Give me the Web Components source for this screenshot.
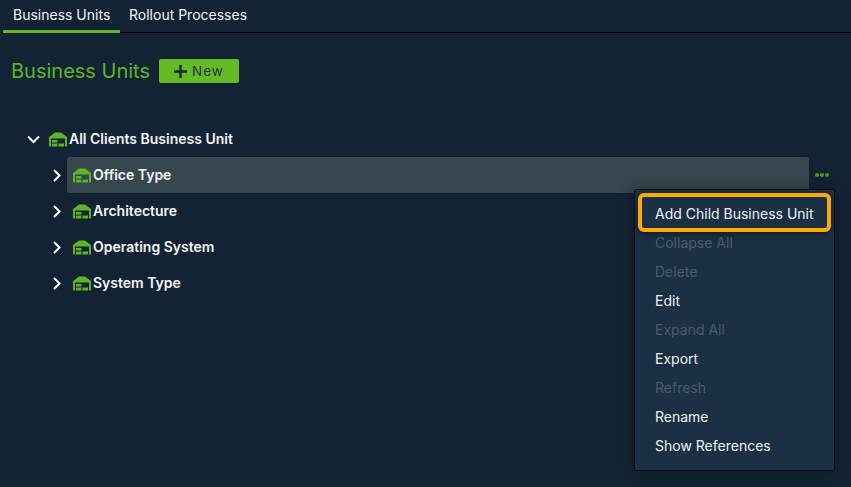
<!DOCTYPE html>
<html>
<head>
<meta charset="utf-8">
<style>
  html, body { margin: 0; height: 100%; }
  body {
    background: #142334;
    color: #fff;
    font-family: Inter, "Open Sans", sans-serif;
    width: 851px;
    height: 487px;
    overflow: hidden;
    position: relative;
  }
</style>
</head>
<body>
<unit-page></unit-page>

<script>
const HOUSE = `
<svg width="20" height="15" viewBox="0 0 20 15" style="flex:none">
  <path fill="#5db524" d="M0 5 L6 .5 H12 L18 5 V14.5 H16 V6.5 H2 V14.5 H0 Z"/>
  <rect x="3" y="8" width="5.5" height="2.5" fill="#5db524"/>
  <rect x="3" y="11.5" width="5.5" height="3" fill="#5db524"/>
  <rect x="9.5" y="11.5" width="5.5" height="3" fill="#5db524"/>
</svg>`;

class TabBar extends HTMLElement {
  constructor() {
    super();
    this.attachShadow({mode: "open"}).innerHTML = `
      <style>
        :host { display: flex; height: 32px; border-bottom: 1px solid #000; padding-left: 3px; font-size: 14px; }
      </style>
      <slot></slot>`;
  }
}

class TabItem extends HTMLElement {
  constructor() {
    super();
    this.attachShadow({mode: "open"}).innerHTML = `
      <style>
        :host { display: block; box-sizing: border-box; height: 33px; padding: 6px 10px 0 9px; color: #f2f5f7; line-height: 18px; white-space: nowrap; }
        :host([active]) { width: 117px; padding-left: 10px; border-bottom: 3px solid #63b726; }
      </style>
      <slot></slot>`;
  }
}

class TitleRow extends HTMLElement {
  constructor() {
    super();
    this.attachShadow({mode: "open"}).innerHTML = `
      <style>
        :host { display: flex; align-items: center; gap: 9px; padding: 26px 0 0 11px; height: 24px; }
        h1 { margin: 0; font-size: 20px; font-weight: 400; color: #5db524; line-height: 24px; }
        button {
          display: flex; align-items: center; justify-content: center; gap: 5px;
          width: 80px; height: 24px; padding: 0; border: 0; border-radius: 2px;
          background: #66ba26; color: #26343f; font: 400 13.5px Inter, sans-serif; letter-spacing: 1px;
        }
      </style>
      <h1><slot></slot></h1>
      <button>
        <svg width="13" height="13" viewBox="0 0 13 13"><path d="M6.5 0v13M0 6.5h13" stroke="#16263a" stroke-width="2.4"/></svg>
        New
      </button>`;
  }
}

class TreeRow extends HTMLElement {
  constructor() {
    super();
    const open = this.hasAttribute("open");
    const chevron = open
      ? `<path d="M1 3.5 L6.5 9 L12 3.5" />`
      : `<path d="M3 1 L8.5 6.5 L3 12" />`;
    let more = "";
    if (this.hasAttribute("selected")) {
      more = `<span class="more"><i></i><i></i><i></i></span>`;
    }
    this.attachShadow({mode: "open"}).innerHTML = `
      <style>
        :host { display: flex; align-items: center; height: 36px; font-size: 14px; font-weight: 600; color: #f4f6f7; }
        .chev { width: 14px; display: flex; justify-content: center; }
        .body { flex: 1; display: flex; align-items: center; height: 36px; margin-left: 3px; padding-left: 6px; border-radius: 3px; }
        :host([selected]) .body { background: #37464f; }
        svg.c { fill: none; stroke: #fff; stroke-width: 2; }
        .more { width: 36px; padding-left: 6px; display: flex; gap: 1px; }
        .more i { width: 4px; height: 4px; border-radius: 50%; background: #4d9a1e; }
        .name { margin-top: -2px; }
      </style>
      <span class="chev"><svg class="c" width="13" height="13" viewBox="0 0 13 13">${chevron}</svg></span>
      <div class="body">${HOUSE}<span class="name"><slot></slot></span></div>
      ${more}`;
  }
}

class UnitTree extends HTMLElement {
  constructor() {
    super();
    this.attachShadow({mode: "open"}).innerHTML = `
      <style>
        :host { display: block; padding: 38px 0 0 26px; }
        .kids { padding: 0 0 0 24px; }
      </style>
      <slot name="root"></slot>
      <div class="kids"><slot></slot></div>`;
  }
}

class ContextMenu extends HTMLElement {
  constructor() {
    super();
    this.attachShadow({mode: "open"}).innerHTML = `
      <style>
        :host {
          position: absolute; left: 634px; top: 189px; box-sizing: border-box; width: 201px; height: 282px;
          background: #1b2f45; border: 1px solid #0a0f14; border-radius: 2px;
          box-shadow: 0 0 16px rgba(0,0,0,.3); padding: 9px 0;
          display: flex; flex-direction: column;
        }
      </style>
      <slot></slot>`;
  }
}

class MenuItem extends HTMLElement {
  constructor() {
    super();
    this.attachShadow({mode: "open"}).innerHTML = `
      <style>
        :host { display: block; height: 29px; line-height: 29px; padding-left: 20px; font-size: 14px; color: #f0f3f5; white-space: nowrap; }
        :host([disabled]) { color: #4b5c6d; }
        :host([focused]) {
          position: relative; margin: -6px 3px -4px 3px; height: 39px; box-sizing: border-box; line-height: 34px;
          padding-left: 13px; border: 4px solid #fbab00; border-radius: 6px;
          box-shadow: 0 2px 6px rgba(0,0,0,.4);
        }
      </style>
      <slot></slot>`;
  }
}

class UnitPage extends HTMLElement {
  constructor() {
    super();
    this.attachShadow({mode: "open"}).innerHTML = `
      <style>:host { display: block; }</style>
      <tab-bar>
        <tab-item active>Business Units</tab-item>
        <tab-item>Rollout Processes</tab-item>
      </tab-bar>
      <title-row>Business Units</title-row>
      <unit-tree>
        <tree-row slot="root" open>All Clients Business Unit</tree-row>
        <tree-row selected>Office Type</tree-row>
        <tree-row>Architecture</tree-row>
        <tree-row>Operating System</tree-row>
        <tree-row>System Type</tree-row>
      </unit-tree>
      <context-menu>
        <menu-item focused>Add Child Business Unit</menu-item>
        <menu-item disabled>Collapse All</menu-item>
        <menu-item disabled>Delete</menu-item>
        <menu-item>Edit</menu-item>
        <menu-item disabled>Expand All</menu-item>
        <menu-item>Export</menu-item>
        <menu-item disabled>Refresh</menu-item>
        <menu-item>Rename</menu-item>
        <menu-item>Show References</menu-item>
      </context-menu>`;
  }
}

customElements.define("tab-bar", TabBar);
customElements.define("tab-item", TabItem);
customElements.define("title-row", TitleRow);
customElements.define("tree-row", TreeRow);
customElements.define("unit-tree", UnitTree);
customElements.define("context-menu", ContextMenu);
customElements.define("menu-item", MenuItem);
customElements.define("unit-page", UnitPage);
</script>
</body>
</html>
